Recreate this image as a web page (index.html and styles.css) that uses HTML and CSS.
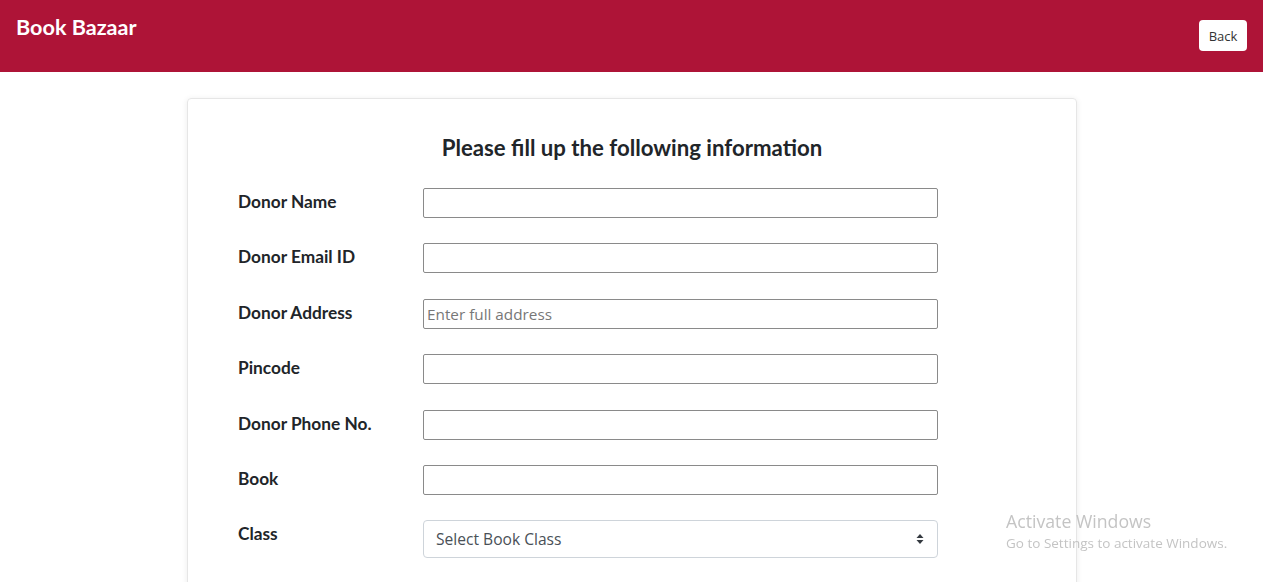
FILE: index.html
```html
<!DOCTYPE html>
<html>
<head>
<meta charset="utf-8">
<link rel="stylesheet" href="styles.css">
</head>
<body>
<header class="navbar">
  <span class="brand">Book Bazaar</span>
  <button class="back-btn">Back</button>
</header>
<main class="main">
  <section class="card">
    <h2 class="title">Please fill up the following information</h2>
    <form class="form">
      <label class="label">Donor Name</label>
      <input class="field" type="text">
      <label class="label">Donor Email ID</label>
      <input class="field" type="text">
      <label class="label">Donor Address</label>
      <input class="field" type="text" placeholder="Enter full address">
      <label class="label">Pincode</label>
      <input class="field" type="text">
      <label class="label">Donor Phone No.</label>
      <input class="field" type="text">
      <label class="label">Book</label>
      <input class="field" type="text">
      <label class="label">Class</label>
      <div class="select">
        <span>Select Book Class</span>
        <svg class="caret" width="8" height="12" viewBox="0 0 8 12"><path d="M4 1 L7.5 5 L0.5 5 Z M4 11 L7.5 7 L0.5 7 Z" fill="#343a40"/></svg>
      </div>
    </form>
  </section>
</main>
<div class="watermark">
  <div class="wm-title">Activate Windows</div>
  <div class="wm-sub">Go to Settings to activate Windows.</div>
</div>
</body>
</html>
```
FILE: styles.css
```css
html, body {
  margin: 0;
  padding: 0;
  background: #fff;
  font-family: Lato, "Open Sans", sans-serif;
  overflow: hidden;
}
.navbar {
  height: 72px;
  background: #ae1437;
  display: flex;
  justify-content: space-between;
  align-items: flex-start;
  padding: 0 16px;
  box-sizing: border-box;
}
.brand {
  color: #fff;
  font-weight: 700;
  font-size: 21.6px;
  line-height: 24px;
  margin-top: 15px;
}
.back-btn {
  margin-top: 20px;
  height: 31px;
  width: 48px;
  background: #fff;
  border: none;
  border-radius: 4px;
  font-family: "Open Sans", sans-serif;
  font-size: 13px;
  color: #333;
  padding: 0;
}
.main {
  padding-top: 26px;
  display: flex;
  justify-content: center;
}
.card {
  width: 890px;
  margin-left: 1px;
  height: 520px;
  box-sizing: border-box;
  border: 1px solid #e6e6e6;
  border-radius: 4px;
  box-shadow: 0 1px 6px rgba(0,0,0,0.08);
  padding: 37px 0 0 50px;
}
.title {
  margin: 0 0 28px 0;
  padding-right: 50px;
  text-align: center;
  font-size: 22.2px;
  line-height: 24px;
  font-weight: 700;
  color: #212529;
}
.form {
  display: grid;
  grid-template-columns: 185px 515px;
  row-gap: 25.4px;
  align-items: start;
}
.label {
  font-weight: 700;
  font-size: 17.3px;
  line-height: 24px;
  color: #212529;
  padding-top: 2px;
}
.field {
  height: 30px;
  box-sizing: border-box;
  border: 1px solid #8a8a8a;
  border-radius: 2px;
  margin: 0;
  padding: 0 3px;
  font-family: "Open Sans", sans-serif;
  font-size: 15.3px;
}
.field::placeholder {
  color: #777;
}
.select {
  height: 38px;
  box-sizing: border-box;
  border: 1px solid #ced4da;
  border-radius: 4px;
  display: flex;
  align-items: center;
  justify-content: space-between;
  padding: 0 13px 0 12px;
  font-family: "Open Sans", sans-serif;
  font-size: 15.6px;
  color: #495057;
}
.watermark {
  position: fixed;
  left: 1006px;
  top: 510px;
  color: #c4c4c4;
  font-family: "Open Sans", sans-serif;
}
.wm-title {
  font-size: 17.7px;
  line-height: 23px;
}
.wm-sub {
  font-size: 13.5px;
  line-height: 20px;
}
```
